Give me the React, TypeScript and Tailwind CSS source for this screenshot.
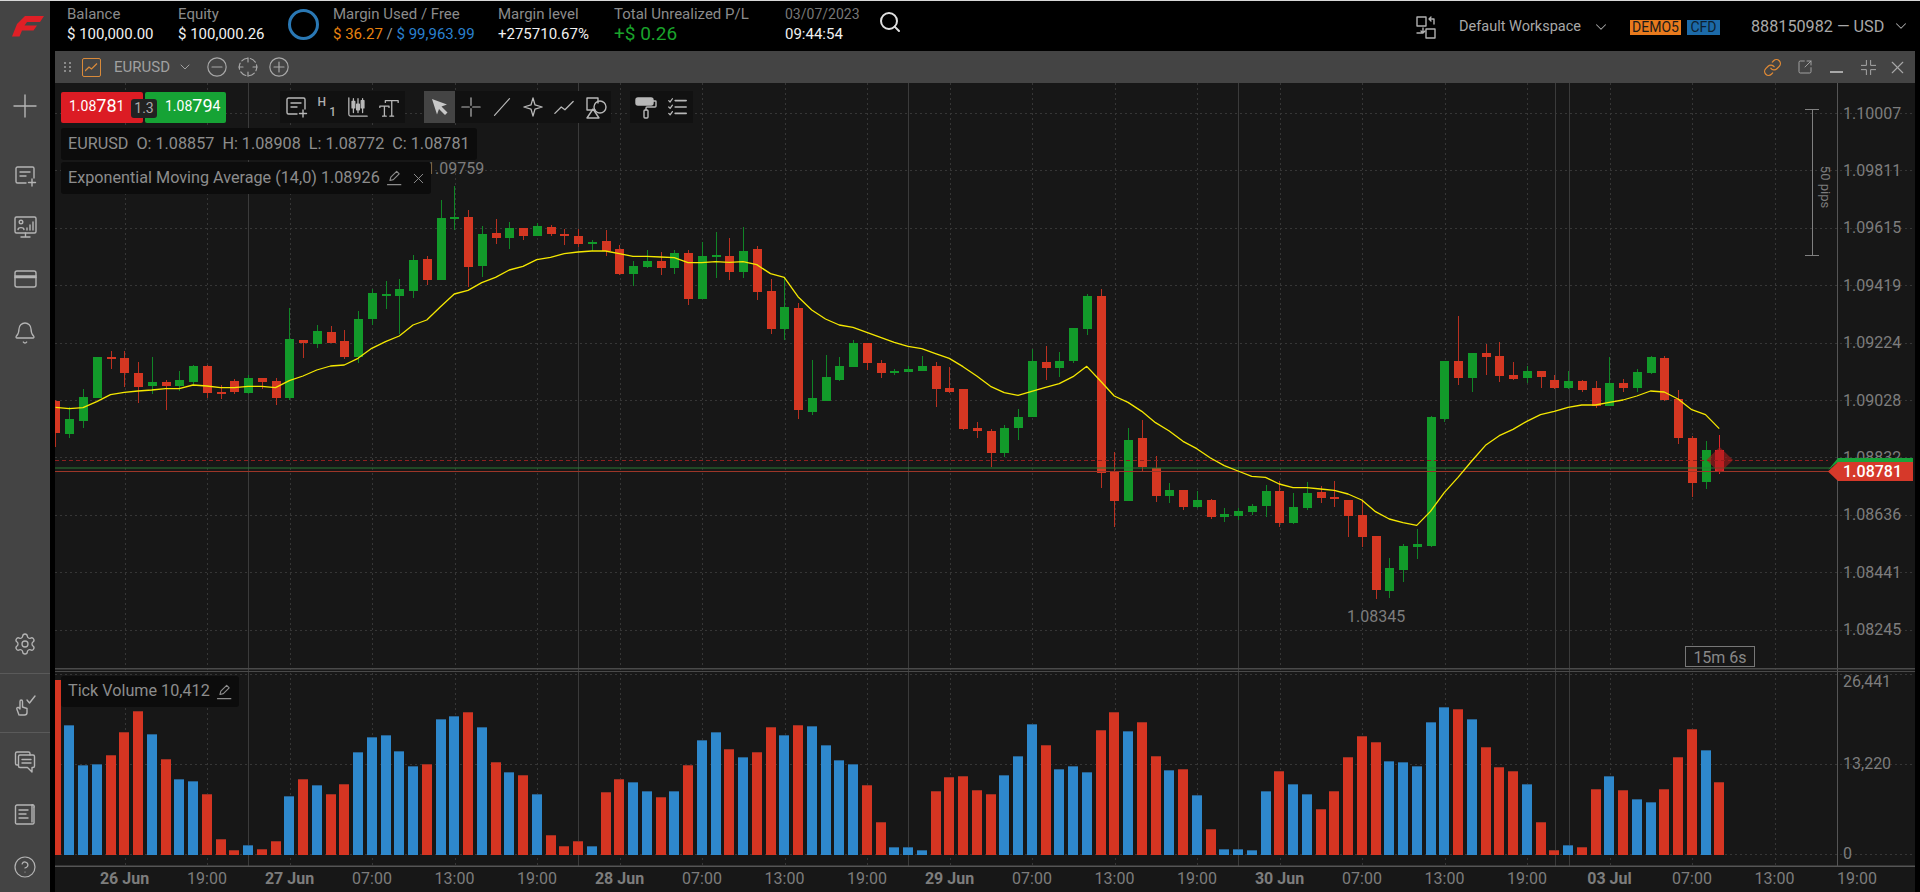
import React from "react";
import { Search, ChevronDown, Settings, Bell, Link, X, SquareArrowOutUpRight, CircleHelp } from "lucide-react";

const step = 13.75;
const cx = (i: number) => 55.5 + i * step;

const parse = (s: string, base: number) =>
  s.trim().split(/\s+/).map((t) => {
    const [a, b, c, d] = t.slice(1).split(",").map(Number);
    return { col: t[0], bt: base + a / 3, bb: base + b / 3, wt: base + c / 3, wb: base + d / 3 };
  });

const candles = [
  ...parse(`r753,850,750,890 g808,853,770,863 g741,812,717,833 g621,745,621,745 r622,628,604,656 r625,668,604,710 r670,710,637,758 g697,707,622,731 r697,707,690,780 g689,707,664,724 g647,695,645,706 r647,729,645,744 r726,733,706,747 r693,725,687,731 g685,729,676,731 r685,695,685,716 r693,744,683,765 g568,744,473,749 r569,579,569,623 g543,583,525,594 r546,579,529,579 r573,621,541,627 g508,621,484,638 g430,508,418,525 g431,437,393,476 g418,437,387,553 g329,422,315,443 r328,391,318,405 g205,391,150,391 g202,208,108,240 r202,350,180,410`, 150),
  ...parse(`g253,347,228,380 r250,263,206,281 g235,263,217,296 r234,257,234,270 g227,257,220,257 r231,252,226,259 r253,259,237,285 r257,283,237,290 g276,283,270,303 r272,303,240,319 r298,373,285,375 g348,373,333,409 g332,351,301,353 r333,353,307,375 g310,353,300,371 r310,447,300,465 g318,447,276,447 g314,320,247,384 r318,365,263,390 g303,365,232,383 r298,425,288,449 r423,538,387,551 g472,538,385,570 r474,781,458,806 g745,785,630,795 g682,752,615,754 g648,689,622,694 g580,650,571,650 r580,639,580,660 r640,669,631,683 g662,668,657,675 g658,665,648,665 g648,662,618,662 r648,718,636,770 r715,725,652,728`, 150),
  ...parse(`r418,538,418,540 r535,542,517,563 r543,609,538,650 g535,609,526,620 g502,534,477,570 g332,500,297,500 r336,354,289,390 g333,354,307,380 g235,332,235,338 g137,238,132,255 r137,669,117,713 r665,752,607,830 g569,752,533,752 r565,651,510,665 r653,738,618,755 g719,737,698,758 r719,770,719,780 g749,771,724,773 r749,801,747,807 g791,800,773,815 g783,797,773,810 g768,786,762,796 g723,767,706,800 r723,820,694,830 g771,820,728,822 g730,775,697,780 r726,745,709,758 r741,748,694,770 r749,797,749,860 r794,860,750,890`, 250),
  ...parse(`r108,269,108,297 g205,272,173,294 g138,209,132,245 g133,141,87,177`, 500),
  ...parse(`g501,888,498,890`, 250),
  ...parse(`g183,358,183,365 r183,234,48,255 g160,234,160,275 r160,170,132,225 r168,227,127,245 r224,238,187,240 g213,234,197,249 r213,230,213,264 r239,264,226,266 g243,264,213,266 r243,269,240,275 r265,317,243,323 g250,317,172,319 r250,264,237,275 g217,264,208,275 g171,219,169,221 r174,301,168,302 r296,414,270,431 r415,549,409,590 g450,545,423,566 r449,516,405,521`, 300),
];

const ema = [
  ...[772,776,773,755,734,727,723,720,716,716,705,708,713,713,709,709,713,692,678,660,648,645,625,595,575,558,525,510,470,432,421].map((v) => 150 + v / 3),
  ...[398,382,360,349,329,322,311,306,303,303,311,319,319,321,323,338,338,335,337,335,344,371,382,440,480,507,525,532,547,562,577,589,596,611,625].map((v) => 150 + v / 3),
  ...[350,378,409,428,436,424,412,401,380,349,393,438,457,484,518,543,574,596,624,647,663,679,682,702,713,713,717,721,732,750,785,807,818,826,784].map((v) => 250 + v / 3),
  ...[578,532,483,436,407,388,364,344,334,322,315,315,307,300,288,273,276,297,329,344,386].map((v) => 300 + v / 3),
];

const vol = `r240 b375 b495 b491 r465 r397 r334 b401 r476 b536 b544 r581 r716 r750 b735 r746 r724 b589 r536 b555 r581 r551 b457 b412 b405 b454 b498 r491 b356 b349 r337 b382 r487 b517 r525 b581 r705 r739 r724 b739 r577 r536 b547 b574 r592 b574 r495 b420 b397 r446 b472 r457 r382 b405 r375 b379 b435 b480 b491 r555 r667 b742 b742 b750 r574 r532 r529 r570 r581 b525 b468 b371 r435 b506 b498 b517 r390 r337 b394 r367 r468 b510 r506 b585 r686 b746 b746 b750 b574 r514 b551 b581 r626 r574 r472 r409 r427 b484 b487 b498 b367 b322 r326 b356 r442 r502 r514 b551 r667 r750 b735 r742 r566 b529 r570 b596 b607 r566 r472 r386 b450 r547`
  .split(" ")
  .map((t) => ({ col: t[0], top: 600 + Number(t.slice(1)) / 3 }));

const priceLabels = ["1.10007","1.09811","1.09615","1.09419","1.09224","1.09028","1.08832","1.08636","1.08441","1.08245"];
const priceY = priceLabels.map((_, i) => 113 + 57.4 * i);
const vDotted = Array.from({ length: 21 }, (_, i) => 124.5 + 82.5 * i);
const timeLabels: [string, boolean][] = [["26 Jun",true],["19:00",false],["27 Jun",true],["07:00",false],["13:00",false],["19:00",false],["28 Jun",true],["07:00",false],["13:00",false],["19:00",false],["29 Jun",true],["07:00",false],["13:00",false],["19:00",false],["30 Jun",true],["07:00",false],["13:00",false],["19:00",false],["03 Jul",true],["07:00",false],["13:00",false],["19:00",false]];

function Chart() {
  const F = { fontFamily: "Roboto, sans-serif" };
  return (
    <svg className="block w-[1860px] h-[809px]" viewBox="55 83 1860 809" style={F}>
      <g stroke="#363636" strokeWidth="1" strokeDasharray="2 3">
        {priceY.map((y) => <line key={y} x1="55" x2="1915" y1={Math.round(y) + 0.5} y2={Math.round(y) + 0.5} />)}
        {[674, 764, 854].map((y) => <line key={y} x1="55" x2="1915" y1={y + 0.5} y2={y + 0.5} />)}
        {vDotted.map((x) => <line key={x} x1={Math.round(x) + 0.5} x2={Math.round(x) + 0.5} y1="83" y2="866" />)}
      </g>
      <g stroke="#3b3b3b" strokeWidth="1">
        {[248, 578, 908, 1238, 1555, 1569].map((x) => <line key={x} x1={x + 0.5} x2={x + 0.5} y1="83" y2="866" />)}
      </g>
      <line x1="1837.5" x2="1837.5" y1="83" y2="866" stroke="#555" />
      <rect x="55" y="668" width="1860" height="1.5" fill="#4a4a4a" />
      <rect x="55" y="671" width="1860" height="1" fill="#4a4a4a" />
      <rect x="55" y="865.5" width="1860" height="1.5" fill="#555" />

      <g shapeRendering="crispEdges">
        {candles.map((c, i) => {
          const x = Math.round(cx(i));
          const last = i === 121;
          const f = c.col === "r" ? (last ? "#e2252b" : "#d53722") : "#129a2a";
          const s = c.col === "r" ? (last ? "#e2252b" : "#b83020") : "#108526";
          if (i === 0) return (
            <g key={i}>
              <rect x={55} y={c.wt} width={1} height={c.wb - c.wt} fill={s} />
              <rect x={55} y={c.bt} width={5} height={c.bb - c.bt} fill={f} />
            </g>
          );
          return (
            <g key={i}>
              <rect x={x} y={c.wt} width="1" height={c.wb - c.wt} fill={s} />
              <rect x={x - 4} y={c.bt} width="9" height={Math.max(c.bb - c.bt, 1)} fill={f} />
            </g>
          );
        })}
      </g>

      <g stroke="#8d1f1f" strokeWidth="1" strokeDasharray="4 3"><line x1="55" x2="1828" y1="460.5" y2="460.5" /></g>
      <line x1="55" x2="1832" y1="468" y2="468" stroke="#2b7a35" strokeWidth="1" />
      <line x1="55" x2="1832" y1="471.5" y2="471.5" stroke="#9c3628" strokeWidth="1" />

      <polyline points={ema.map((y, i) => `${cx(i)},${y}`).join(" ")} fill="none" stroke="#f5e800" strokeWidth="1.3" strokeLinejoin="round" />

      <polygon points="1706.5,460 1719.7,447 1733,460 1719.7,473" fill="#a81c1c" fillOpacity="0.62" />

      <g shapeRendering="crispEdges">
        {vol.map((v, i) => {
          const x = Math.round(cx(i));
          const f = v.col === "r" ? "#d53522" : "#2e88cc";
          const s = v.col === "r" ? "#9c2f22" : "#27618e";
          if (i === 0) return <rect key={i} x="55" y={v.top} width="6" height={855 - v.top} fill={f} />;
          return (
            <g key={i}>
              <rect x={x - 5} y={v.top} width="10" height={855 - v.top} fill={f} />
              <rect x={x - 5} y={v.top} width="10" height="1" fill={s} />
            </g>
          );
        })}
      </g>

      <g fontSize="16" fill="#7d7d7d" dominantBaseline="central">
        {priceLabels.map((p, i) => <text key={p} x="1843" y={priceY[i]}>{p}</text>)}
        <text x="1843" y="681">26,441</text>
        <text x="1843" y="763">13,220</text>
        <text x="1843" y="853">0</text>
        <text x="426" y="168">1.09759</text>
        <text x="1347" y="616">1.08345</text>
      </g>

      <polygon points="1828,470 1838,458 1913,458 1913,462 1838,462" fill="#19a33a" />
      <polygon points="1828,471.5 1838,462 1913,462 1913,481 1838,481" fill="#d6392a" />
      <text x="1843" y="471.5" fontSize="16" fontWeight="500" fill="#fff" dominantBaseline="central">1.08781</text>

      <g stroke="#808080" fill="none" strokeWidth="1">
        <line x1="1805" x2="1819" y1="109.5" y2="109.5" />
        <line x1="1805" x2="1819" y1="255.5" y2="255.5" />
        <line x1="1812.5" x2="1812.5" y1="109" y2="256" />
      </g>
      <text x="1825" y="187" fontSize="13" fill="#7d7d7d" textAnchor="middle" dominantBaseline="central" transform="rotate(90 1825 187)">50 pips</text>

      <g>
        <rect x="1685.5" y="646.5" width="69" height="20" fill="#171717" stroke="#777" />
        <text x="1720" y="657" fontSize="16" fill="#888" textAnchor="middle" dominantBaseline="central">15m 6s</text>
      </g>

      <g fontSize="16" fill="#7d7d7d" textAnchor="middle" dominantBaseline="central">
        {timeLabels.map(([t, b], i) => (
          <text key={i} x={124.5 + 82.5 * i} y="878" fontWeight={b ? 700 : 400}>{t}</text>
        ))}
      </g>
    </svg>
  );
}

const Ico = ({ children, s = 24, cls = "", vb }: { children: React.ReactNode; s?: number; cls?: string; vb?: string }) => (
  <svg width={s} height={s} viewBox={vb ?? "0 0 24 24"} fill="none" stroke="currentColor" strokeWidth="1.4" strokeLinecap="round" strokeLinejoin="round" className={cls}>{children}</svg>
);

const NoteAdd = () => (
  <Ico><path d="M13 19H4.5A1.5 1.5 0 0 1 3 17.5V4.500A1.500 1.500 0 0 1 4.500 3h15A1.500 1.500 0 0 1 21 4.500V14" /><path d="M7 8h10M7 12h6M19 15v7M15.500 18.500h7" /></Ico>
);
const Pen = () => (
  <Ico s={20}><path d="M6 15l1-4 7-7 3 3-7 7z" /><path d="M3 20h16" /></Ico>
);

function Sidebar() {
  return (
    <aside className="w-[50px] h-full shrink-0 bg-[#444] text-[#b4b4b4] flex flex-col items-center pb-[13px]">
      <div className="h-[50px] ml-[5px] flex items-center justify-center">
        <svg width="32" height="21" viewBox="0 0 32 21"><path d="M13 0H32L28 6H15L12.500 9.500H25L21.500 14.500H10L7.500 20.500H0L5 8z" fill="#e01f26" /></svg>
      </div>
      <div className="mt-[43px] h-6"><Ico s={24} ><path d="M12 1v22M1 12h22" /></Ico></div>
      <div className="mt-[46px] h-6"><NoteAdd /></div>
      <div className="mt-[27px] h-6">
        <Ico><rect x="2" y="2" width="21" height="16" rx="1.500" /><path d="M12.500 18v3M8 22h9" /><circle cx="8" cy="7" r="1.800" /><path d="M5 14.500c.5-2.500 5.500-2.500 6 0M14 15v-2M17 15v-5M20 15V7" /></Ico>
      </div>
      <div className="mt-[28px] h-6">
        <Ico><rect x="2" y="4" width="21" height="16" rx="2" /><path d="M2 9h21M2 10.500h21" /></Ico>
      </div>
      <div className="mt-[30px] h-6"><Bell size={24} strokeWidth={1.3} /></div>
      <div className="mt-auto h-6"><Settings size={24} strokeWidth={1.3} /></div>
      <div className="mt-[17px] w-full h-px bg-[#5a5a5a]" />
      <div className="mt-[19px] h-6">
        <Ico><path d="M7 22H11.500C13 22 14 21 14 19.500V15.500L9.500 14V8.500C9.500 6.500 7 6.500 7 8.500V16L5.500 14.500C4 14 3.500 15.500 4 16.500L6 22" /><path d="M14 7l2.500 3L22 3" /></Ico>
      </div>
      <div className="mt-[15px] w-full h-px bg-[#5a5a5a]" />
      <div className="mt-[17px] h-6">
        <Ico><path d="M5 15H4A1.500 1.500 0 0 1 2.500 13.500V3.500A1.500 1.500 0 0 1 4 2H15.500A1.500 1.500 0 0 1 17 3.500V5" /><path d="M7 5H20A1.500 1.500 0 0 1 21.500 6.500V16A1.500 1.500 0 0 1 20 17.500H19V22L14.500 17.500H7A1.500 1.500 0 0 1 5.500 16V6.500A1.500 1.500 0 0 1 7 5Z" /><path d="M9 9.500H18M9 13H18" /></Ico>
      </div>
      <div className="mt-[28px] h-6">
        <Ico><path d="M19 3H4A1.500 1.500 0 0 0 2.500 4.500V20A1.500 1.500 0 0 0 4 22H19.500A1.500 1.500 0 0 0 21 20V5" /><path d="M21 5A1.500 1.500 0 0 0 19 3V20" /><path d="M6 8h9M6 12h7M6 16h9" /></Ico>
      </div>
      <div className="mt-[29px] h-6"><CircleHelp size={24} strokeWidth={1.2} /></div>
    </aside>
  );
}

const Stat = ({ w, ml, label, children }: { w: string; ml: string; label: string; children: React.ReactNode }) => (
  <div className={`${w} ${ml} shrink-0 flex flex-col whitespace-nowrap`}>
    <span className="text-[15px] leading-[20px] text-[#8b8b8b]">{label}</span>
    <span className="text-[15px] leading-[20px] text-[#f0f0f0]">{children}</span>
  </div>
);

function TopBar() {
  return (
    <header className="h-[50px] shrink-0 bg-black flex items-start pt-[3px] pl-[17px] pr-[10px]">
      <Stat w="w-[85px]" ml="ml-0" label="Balance">$ 100,000.00</Stat>
      <Stat w="w-[85px]" ml="ml-[26px]" label="Equity">$ 100,000.26</Stat>
      <div className="ml-[25px] mt-[5px] w-[31px] h-[31px] shrink-0 rounded-full border-[3px] border-[#2a78b4]" />
      <Stat w="w-[139px]" ml="ml-[14px]" label="Margin Used / Free">
        <span className="text-[#e8820f]">$ 36.27</span> <span className="text-[#9a9a9a]">/</span> <span className="text-[#2a80d0]">$ 99,963.99</span>
      </Stat>
      <Stat w="w-[91px]" ml="ml-[26px]" label="Margin level">+275710.67%</Stat>
      <div className="w-[145px] ml-[25px] shrink-0 flex flex-col whitespace-nowrap">
        <span className="text-[15px] leading-[20px] text-[#8b8b8b]">Total Unrealized P/L</span>
        <span className="text-[19px] leading-[20px] text-[#1aa32b]">+$ 0.26</span>
      </div>
      <div className="w-[73px] ml-[26px] shrink-0 flex flex-col whitespace-nowrap">
        <span className="text-[14px] leading-[20px] text-[#777]">03/07/2023</span>
        <span className="text-[15px] leading-[20px] text-[#f0f0f0]">09:44:54</span>
      </div>
      <Search size={24} strokeWidth={2} className="ml-[20px] mt-[6px] text-[#e0e0e0] shrink-0" />
      <div className="ml-auto flex items-center h-[46px] text-[#a8a8a8]">
        <Ico s={24} cls="text-[#b0b0b0] -ml-[2px]"><rect x="3" y="2" width="9" height="9" /><rect x="12" y="14" width="9" height="9" /><path d="M20 9V4h-5M17 6l-2-2 2-2M3 18h6v-5M7 16l2 2 2-2" /></Ico>
        <span className="ml-[21px] w-[127px] text-[14.5px] whitespace-nowrap">Default Workspace</span>
        <ChevronDown size={18} strokeWidth={1.4} className="ml-[6px]" />
        <span className="ml-[20px] w-[51px] h-[15px] bg-[#e87a1d] text-[#1a1a1a] text-[14px] leading-[15px] text-center">DEMO5</span>
        <span className="ml-[6px] w-[33px] h-[15px] bg-[#1c6aa8] text-[#0d1f2f] text-[14px] leading-[15px] text-center">CFD</span>
        <span className="ml-[31px] w-[134px] text-[16.2px] whitespace-nowrap">888150982 — USD</span>
        <ChevronDown size={18} strokeWidth={1.4} className="ml-[7px] -mt-[3px]" />
      </div>
    </header>
  );
}

function PanelHeader() {
  return (
    <div className="h-[32px] shrink-0 bg-[#444] flex items-center text-[#a8a8a8] pl-[9px] pr-[7px]">
      <svg width="7" height="11" viewBox="0 0 7 11" fill="#8a8a8a"><rect x="0" y="0" width="2" height="2" /><rect x="5" y="0" width="2" height="2" /><rect x="0" y="4" width="2" height="2" /><rect x="5" y="4" width="2" height="2" /><rect x="0" y="8" width="2" height="2" /><rect x="5" y="8" width="2" height="2" /></svg>
      <div className="ml-[11px] w-[19px] h-[19px] border-[1.5px] border-[#d98a3a] rounded-[2px] flex items-center justify-center">
        <svg width="13" height="9" viewBox="0 0 13 9" fill="none" stroke="#d98a3a" strokeWidth="1.300"><path d="M0 8l4-4 2.500 2L12 .5" /></svg>
      </div>
      <span className="ml-[13px] w-[55px] text-[15px] text-[#a0a0a0]">EURUSD</span>
      <ChevronDown size={16} strokeWidth={1.4} className="ml-[8px]" />
      <Ico s={20} cls="ml-[14px]"><circle cx="12" cy="12" r="11" /><path d="M6 12h12" /></Ico>
      <Ico s={20} cls="ml-[11px]"><circle cx="12" cy="12" r="10.500" strokeDasharray="7.500 3.500" strokeDashoffset="3" /><path d="M12 1v5M12 18v5M1 12h5M18 12h5" /></Ico>
      <Ico s={20} cls="ml-[11px]"><circle cx="12" cy="12" r="11" /><path d="M6 12h12M12 6v12" /></Ico>
      <div className="ml-auto flex items-center">
        <Link size={19} strokeWidth={1.6} className="text-[#e08a35]" />
        <SquareArrowOutUpRight size={16} strokeWidth={1.4} className="ml-[15px]" />
        <div className="ml-[17px] mt-[9px] w-[13px] h-[2px] bg-[#a8a8a8]" />
        <Ico s={17} cls="ml-[17px]"><path d="M9 2v7H2M15 2v7h7M9 22v-7H2M15 22v-7h7" /></Ico>
        <X size={21} strokeWidth={1.3} className="ml-[10px]" />
      </div>
    </div>
  );
}

const ToolGroup = ({ cls, children }: { cls: string; children: React.ReactNode }) => (
  <div className={`absolute top-[8px] h-[32px] bg-[#111] flex items-center text-[#b8b8b8] ${cls}`}>{children}</div>
);
const Tool = ({ children, active }: { children: React.ReactNode; active?: boolean }) => (
  <div className={`w-[31.2px] h-[32px] shrink-0 flex items-center justify-center ${active ? "bg-[#444]" : ""}`}>{children}</div>
);

function Overlays() {
  return (
    <>
      <div className="absolute left-[6px] top-[9px] w-[82px] h-[31px] bg-[#dc1c24] rounded-[2px] text-white flex items-center pl-[8px] pb-[3px] text-[14px] leading-none">
        <span>1.08</span><span className="text-[18px]">78</span><span>1</span>
      </div>
      <div className="absolute left-[90px] top-[9px] w-[81px] h-[31px] bg-[#16a335] rounded-[2px] text-white flex items-center pl-[20px] pb-[3px] text-[14px] leading-none">
        <span>1.08</span><span className="text-[18px]">79</span><span>4</span>
      </div>
      <div className="absolute left-[76px] top-[16px] w-[26px] h-[19px] bg-[#222] rounded-[3px] text-[#aaa] text-[14px] leading-[19px] text-center">1.3</div>

      <ToolGroup cls="left-[225px] w-[125px]">
        <Tool><NoteAdd /></Tool>
        <Tool><div className="flex text-[#b0b0b0] text-[12px] font-medium leading-none"><span>H</span><span className="mt-[10px] ml-[3px]">1</span></div></Tool>
        <Tool>
          <Ico s={22}><path d="M2 2v18a2 2 0 0 0 2 2h18" /><path d="M7 3v15M12 3v15M17 3v15" /><rect x="5.500" y="6" width="3" height="7" fill="currentColor" /><rect x="10.500" y="9" width="3" height="6" fill="currentColor" /><rect x="15.500" y="5" width="3" height="8" fill="currentColor" /></Ico>
        </Tool>
        <Tool>
          <Ico s={22}><path d="M8 5h14M15 5v17M13 22h4M2 11h10M7 11v11M5 22h4M8 5v2M22 5v2M2 11v1.500M12 11v1.500" /></Ico>
        </Tool>
      </ToolGroup>
      <ToolGroup cls="left-[369px] w-[187px]">
        <Tool active>
          <svg width="18" height="18" viewBox="0 0 18 18" fill="#c8c8c8"><path d="M1 1l15 5.500-5.500 2 6 6-2.500 2.500-6-6-2 5.500z" /></svg>
        </Tool>
        <Tool><Ico s={20}><path d="M12 1v9M12 14v9M1 12h9M14 12h9" /></Ico></Tool>
        <Tool><Ico s={20}><path d="M3 22L21 2" /></Ico></Tool>
        <Tool><Ico s={22}><path d="M12 2l2.200 7.800L22 12l-7.800 2.200L12 22l-2.200-7.800L2 12l7.800-2.200z" /></Ico></Tool>
        <Tool><Ico s={22}><path d="M2 19l7-7 4 3 9-9" /></Ico></Tool>
        <Tool><Ico s={24}><path d="M11 15H3V3h11v5" /><circle cx="16" cy="12" r="6" /><path d="M9 14L15 23H3z" /></Ico></Tool>
      </ToolGroup>
      <ToolGroup cls="left-[575px] w-[63px]">
        <Tool><Ico s={24}><rect x="2" y="3" width="17" height="7" rx="2" fill="currentColor" /><path d="M19 6h2.500a.5.5 0 0 1 .5.5V11a1 1 0 0 1-1 1h-8a1 1 0 0 0-1 1v2" /><rect x="10" y="15" width="4" height="8" rx="1" /></Ico></Tool>
        <Tool><Ico s={22}><path d="M10 5h12M10 12h12M10 19h12" strokeWidth="1.800" /><path d="M3 5l1.500 1.500L7 3M3 12l1.500 1.500L7 10M3 19l1.500 1.500L7 17" /></Ico></Tool>
      </ToolGroup>

      <div className="absolute left-[6px] top-[45px] w-[416px] h-[32px] bg-[#0c0c0c] rounded-[3px] pl-[7px] text-[#8c8c8c] text-[16.2px] leading-[32px] whitespace-pre">EURUSD  O: 1.08857  H: 1.08908  L: 1.08772  C: 1.08781</div>
      <div className="absolute left-[6px] top-[79px] w-[370px] h-[32px] bg-[#0c0c0c] rounded-[3px] pl-[7px] text-[#8c8c8c] text-[16.2px] flex items-center whitespace-nowrap">
        <span>Exponential Moving Average (14,0) 1.08926</span>
        <span className="ml-[5px] flex"><Pen /></span>
        <X size={17} strokeWidth={1.4} className="ml-[5px]" />
      </div>
      <div className="absolute left-[6px] top-[593px] w-[178px] h-[31px] bg-[#0c0c0c] rounded-[3px] pl-[7px] text-[#8c8c8c] text-[16.2px] flex items-center whitespace-nowrap">
        <span>Tick Volume 10,412</span>
        <span className="ml-[5px] flex"><Pen /></span>
      </div>
    </>
  );
}

export default function App() {
  return (
    <div className="w-[1920px] h-[892px] overflow-hidden border-t border-[#d8d8d8] bg-black flex font-['Roboto',sans-serif]">
      <Sidebar />
      <div className="w-[1870px] h-full flex flex-col">
        <TopBar />
        <section className="ml-[5px] w-[1860px] flex-1 flex flex-col">
          <PanelHeader />
          <div className="relative flex-1 bg-[#171717] overflow-hidden">
            <Chart />
            <Overlays />
          </div>
        </section>
      </div>
    </div>
  );
}
